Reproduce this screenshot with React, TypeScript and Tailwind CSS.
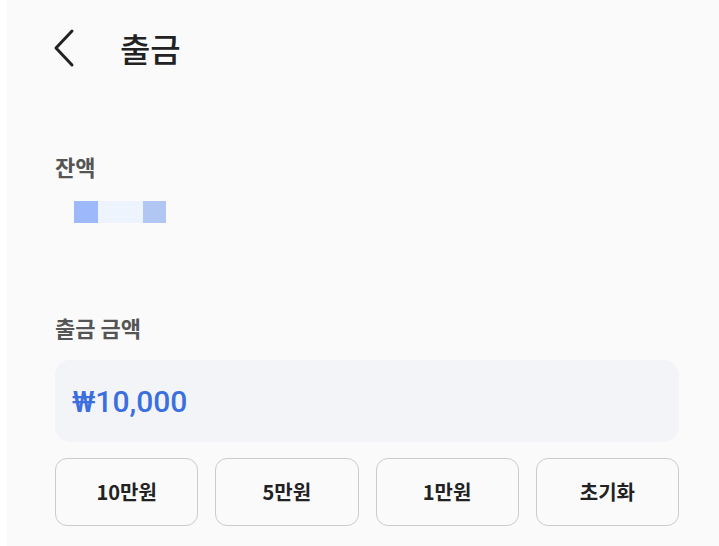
const amounts = ["10만원", "5만원", "1만원", "초기화"];

export default function App() {
  return (
    <div className="min-h-[546px] w-full bg-[#fafafa] border-l-[7px] border-white font-['Noto_Sans_CJK_KR',sans-serif]">
      <header className="flex h-[96px] items-center">
        <button className="ml-[45px] flex h-[40px] w-[24px] items-center justify-center">
          <svg width="22" height="40" viewBox="0 0 22 40" fill="none">
            <path
              d="M19 3 L3 20 L19 37"
              stroke="#222"
              strokeWidth="3"
              strokeLinecap="round"
              strokeLinejoin="round"
            />
          </svg>
        </button>
        <h1 className="ml-[44px] text-[33px] font-medium leading-none text-[#222]">
          출금
        </h1>
      </header>

      <div className="pl-[48px] pr-[40px]">
        <div className="mt-[59px] text-[22px] font-semibold leading-none text-[#555]">
          잔액
        </div>
        <div className="mt-[24px] ml-[19px] flex h-[22px] blur-[0.6px]">
          <div className="w-[24px] bg-[#9db8fb]" />
          <div className="w-[45px] bg-[#eef4fd]" />
          <div className="w-[23px] bg-[#b1c6f3]" />
        </div>

        <div className="mt-[93px] text-[22px] font-semibold leading-none text-[#555]">
          출금 금액
        </div>
        <div className="mt-[22px] flex h-[82px] items-center rounded-[15px] bg-[#f3f4f7] px-[17px]">
          <span className="font-['Roboto','Noto_Sans_CJK_KR',sans-serif] text-[30px] font-medium text-[#3b6fe0]">
            ₩10,000
          </span>
        </div>

        <div className="mt-[16px] grid grid-cols-4 gap-[17px]">
          {amounts.map((a) => (
            <button
              key={a}
              className="flex h-[68px] items-center justify-center rounded-[12px] border border-[#cbcbcb] text-[20px] font-bold text-[#222]"
            >
              {a}
            </button>
          ))}
        </div>
      </div>
    </div>
  );
}
